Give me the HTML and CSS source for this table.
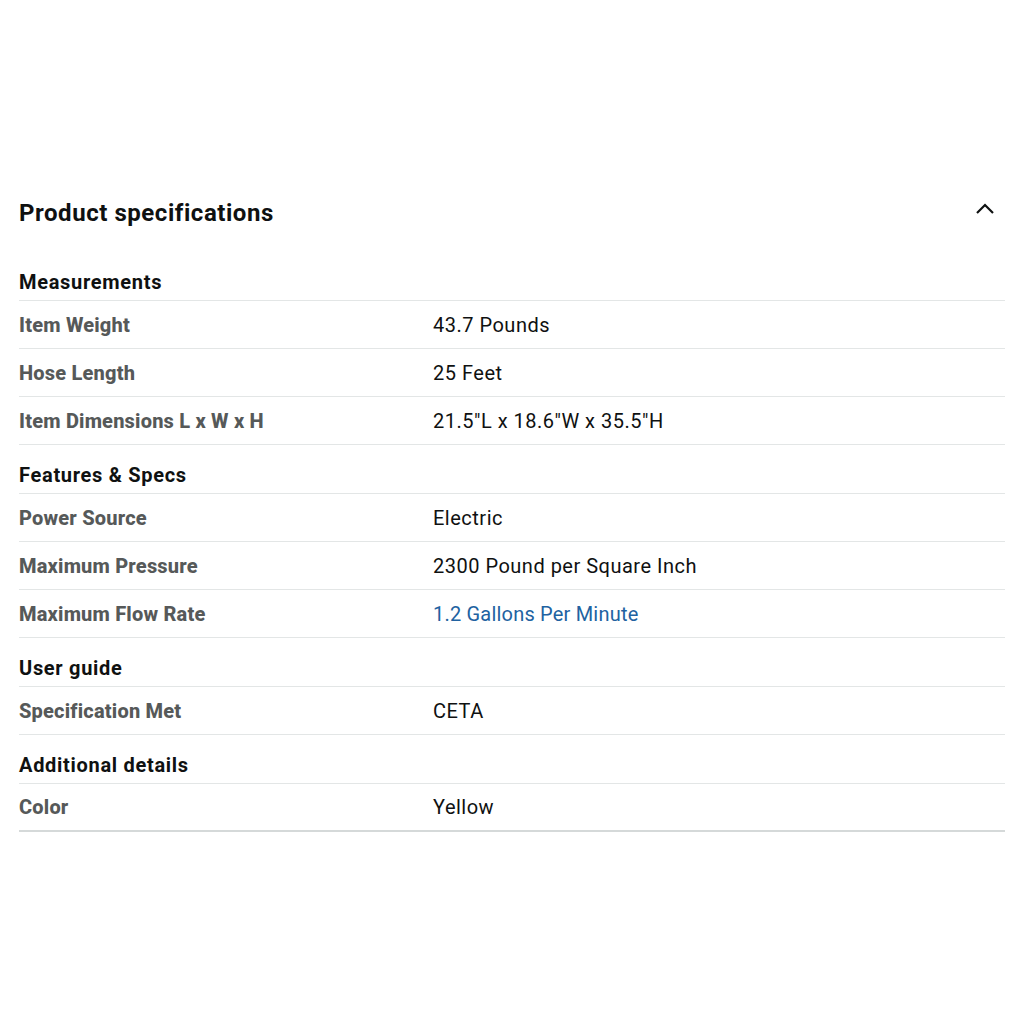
FILE: index.html
```html
<!DOCTYPE html>
<html lang="en">
<head>
    <meta charset="UTF-8">
    <meta name="viewport" content="width=device-width, initial-scale=1.0">
    <title>Product specifications</title>
    <link rel="stylesheet" href="styles.css">
</head>
<body>

    <div class="container">
        <div class="spec-header">
            <h2>Product specifications</h2>
            <svg class="chevron" width="20" height="14" viewBox="0 0 20 14">
                <path d="M2 11 L10 3 L18 11" fill="none" stroke="#0f1111" stroke-width="2.2"/>
            </svg>
        </div>

        <div class="spec-table">
            <div class="group-title">Measurements</div>
            <div class="spec-row"><span class="label">Item Weight</span><span class="value">43.7 Pounds</span></div>
            <div class="spec-row"><span class="label">Hose Length</span><span class="value">25 Feet</span></div>
            <div class="spec-row"><span class="label">Item Dimensions L x W x H</span><span class="value">21.5"L x 18.6"W x 35.5"H</span></div>

            <div class="group-title">Features &amp; Specs</div>
            <div class="spec-row"><span class="label">Power Source</span><span class="value">Electric</span></div>
            <div class="spec-row"><span class="label">Maximum Pressure</span><span class="value">2300 Pound per Square Inch</span></div>
            <div class="spec-row"><span class="label">Maximum Flow Rate</span><span class="value link">1.2 Gallons Per Minute</span></div>

            <div class="group-title">User guide</div>
            <div class="spec-row"><span class="label">Specification Met</span><span class="value">CETA</span></div>

            <div class="group-title">Additional details</div>
            <div class="spec-row last"><span class="label">Color</span><span class="value">Yellow</span></div>
        </div>
    </div>

</body>
</html>
```

FILE: styles.css
```css
* {
    margin: 0;
    padding: 0;
    box-sizing: border-box;
}

body {
    font-family: Roboto, "Liberation Sans", sans-serif;
    background-color: #ffffff;
    color: #0f1111;
}

.container {
    padding: 190px 19px 0 19px;
}

.spec-header {
    display: flex;
    justify-content: space-between;
    align-items: center;
    height: 46px;
}

.spec-header h2 {
    font-size: 24px;
    font-weight: 700;
    letter-spacing: 0.55px;
}

.chevron {
    margin-right: 10px;
    margin-top: -8px;
}

.spec-table {
    margin-top: 16px;
}

.group-title {
    height: 49px;
    display: flex;
    align-items: flex-end;
    padding-bottom: 6px;
    font-size: 20px;
    font-weight: 700;
    border-bottom: 1px solid #e3e6e6;
    letter-spacing: 0.7px;
}

.spec-row {
    height: 48px;
    display: flex;
    align-items: center;
    border-bottom: 1px solid #e3e6e6;
}

.spec-row.last {
    border-bottom: 2px solid #d5d9d9;
}

.label {
    width: 414px;
    font-size: 20px;
    font-weight: 800;
    color: #565959;
    letter-spacing: 0.2px;
}

.value {
    font-size: 20px;
    color: #0f1111;
    letter-spacing: 0.5px;
}

.value.link {
    color: #2162a1;
    letter-spacing: 0.2px;
}
```
